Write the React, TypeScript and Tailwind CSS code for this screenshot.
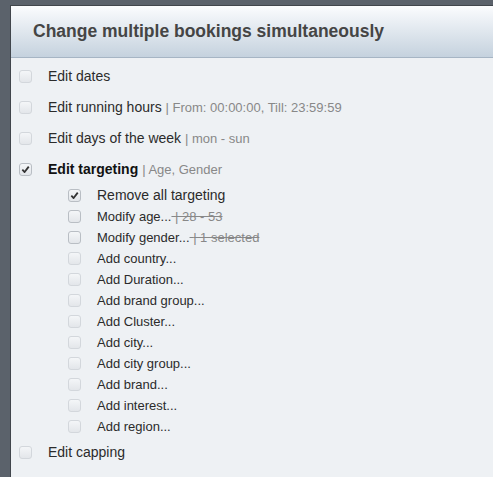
import clsx from 'clsx';

type SubItem = { label: string; checked?: boolean; strike?: string; big?: boolean };

const SUB_ITEMS: SubItem[] = [
  { label: 'Remove all targeting', checked: true, big: true },
  { label: 'Modify age...', strike: '| 28 - 53' },
  { label: 'Modify gender...', strike: '| 1 selected' },
  { label: 'Add country...' },
  { label: 'Add Duration...' },
  { label: 'Add brand group...' },
  { label: 'Add Cluster...' },
  { label: 'Add city...' },
  { label: 'Add city group...' },
  { label: 'Add brand...' },
  { label: 'Add interest...' },
  { label: 'Add region...' },
];

function Box({ checked, faded }: { checked?: boolean; faded?: boolean }) {
  return (
    <span
      className={clsx(
        'flex items-center justify-center size-[13px] rounded-[3px] border bg-gradient-to-b from-[#f4f6f8] to-[#e3e6ea] shrink-0',
        faded ? 'border-[#d3d7dc]' : 'border-[#b9bec4]',
      )}
    >
      {checked && (
        <svg width="9" height="9" viewBox="0 0 10 10">
          <path d="M1.5 5.2 L4 7.8 L8.6 1.8" fill="none" stroke="#333" strokeWidth="2" strokeLinejoin="round" />
        </svg>
      )}
    </span>
  );
}

function Row({ checked, children }: { checked?: boolean; children: React.ReactNode }) {
  return (
    <div className="flex items-center h-[31px] pl-[8px]">
      <Box checked={checked} faded={!checked} />
      <div className="ml-[16px] text-[14px] text-[#2b2b2b] whitespace-nowrap">{children}</div>
    </div>
  );
}

export default function App() {
  return (
    <div
      className="w-[493px] h-[477px] bg-[#5b626b] pt-[5px] pl-[10px] overflow-hidden"
      style={{ fontFamily: '"Liberation Sans", Arial, sans-serif' }}
    >
      <div className="h-full border-t border-l border-[#41464c] bg-[#eef1f4]">
        <div className="h-[52px] flex items-center pl-[22px] bg-gradient-to-b from-[#fbfcfe] to-[#c5d2de] border-b border-[#a6b5c4]">
          <h1 className="text-[17.5px] font-bold text-[#454545] -mt-[1px]">Change multiple bookings simultaneously</h1>
        </div>

        <div className="pt-[3px]">
          <Row>Edit dates</Row>
          <Row>
            Edit running hours <span className="text-[13px] text-[#888]">| From: 00:00:00, Till: 23:59:59</span>
          </Row>
          <Row>
            Edit days of the week <span className="text-[13px] text-[#888]">| mon - sun</span>
          </Row>
          <Row checked>
            <span className="font-bold text-[#111]">Edit targeting</span>{' '}
            <span className="text-[13px] text-[#888]">| Age, Gender</span>
          </Row>

          <div className="flex flex-col">
            {SUB_ITEMS.map(item => (
              <div key={item.label} className="flex items-center h-[21px] pl-[57px]">
                <Box checked={item.checked} faded={!item.checked && !item.strike} />
                <span
                  className={clsx(
                    'ml-[16px] text-[#2b2b2b] whitespace-nowrap',
                    item.big ? 'text-[14px]' : 'text-[13px]',
                  )}
                >
                  {item.label}
                  {item.strike && (
                    <span className="text-[#888] line-through">&nbsp;{item.strike}</span>
                  )}
                </span>
              </div>
            ))}
          </div>

          <Row>Edit capping</Row>
        </div>
      </div>
    </div>
  );
}
